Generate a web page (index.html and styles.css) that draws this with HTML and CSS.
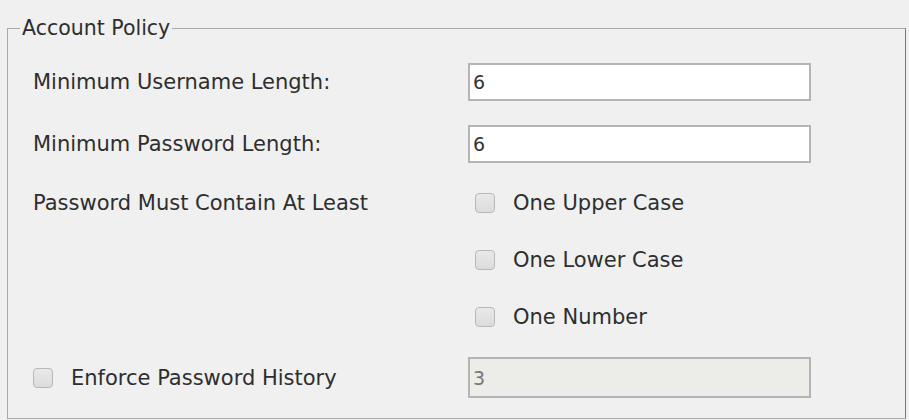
FILE: index.html
```html
<!DOCTYPE html>
<html lang="en">
<head>
  <meta charset="UTF-8">
  <title>Account Policy</title>
  <link rel="stylesheet" href="styles.css">
</head>
<body>
  <fieldset class="policy">
    <legend>Account Policy</legend>

    <div class="row row-first">
      <label class="caption" for="minUser">Minimum Username Length:</label>
      <input type="text" id="minUser" class="field" value="6">
    </div>

    <div class="row row-second">
      <label class="caption" for="minPass">Minimum Password Length:</label>
      <input type="text" id="minPass" class="field" value="6">
    </div>

    <div class="row row-check">
      <span class="caption">Password Must Contain At Least</span>
      <label class="check"><input type="checkbox"> One Upper Case</label>
    </div>
    <div class="row">
      <span class="caption"></span>
      <label class="check"><input type="checkbox"> One Lower Case</label>
    </div>
    <div class="row">
      <span class="caption"></span>
      <label class="check"><input type="checkbox"> One Number</label>
    </div>

    <div class="row row-last">
      <label class="caption check"><input type="checkbox"> Enforce Password History</label>
      <input type="text" class="field" value="3" disabled>
    </div>
  </fieldset>
</body>
</html>
```

FILE: styles.css
```css
body {
  margin: 0;
  background: #f0f0f0;
  font-family: "DejaVu Sans", Verdana, sans-serif;
  font-size: 21px;
  color: #2e2e2e;
}

.policy {
  margin: 16px 3px 0 7px;
  padding: 0 94px 20px 12px;
  border: 1px solid #a9a9a9;
  border-right-color: #777;
}

.policy legend {
  padding: 0 2px;
  line-height: 24px;
  font-size: 20.5px;
}

.row {
  display: flex;
  align-items: center;
  height: 38px;
  margin-top: 19px;
  padding-left: 13px;
}

.row-first {
  margin-top: 23px;
}

.row-second {
  margin-top: 24px;
}

.row-check {
  margin-top: 21px;
}

.row-last {
  margin-top: 21px;
  height: 41px;
}

.caption {
  width: 435px;
  flex: none;
}

.field {
  width: 343px;
  height: 100%;
  box-sizing: border-box;
  margin: 0;
  padding: 0 3px;
  border: 2px solid #b4b4b4;
  background: #fff;
  font-family: inherit;
  font-size: 19px;
  color: #333;
}

.field:disabled {
  background: #ecece8;
  color: #777;
}

.check {
  display: flex;
  align-items: center;
  gap: 18px;
}

.check input {
  appearance: none;
  width: 20px;
  height: 20px;
  margin: 0 0 0 7px;
  border: 1px solid #b8b8b8;
  border-radius: 4px;
  background: linear-gradient(#e9e9e9, #dcdcdc);
}

.caption.check input {
  margin-left: 0;
}
```
